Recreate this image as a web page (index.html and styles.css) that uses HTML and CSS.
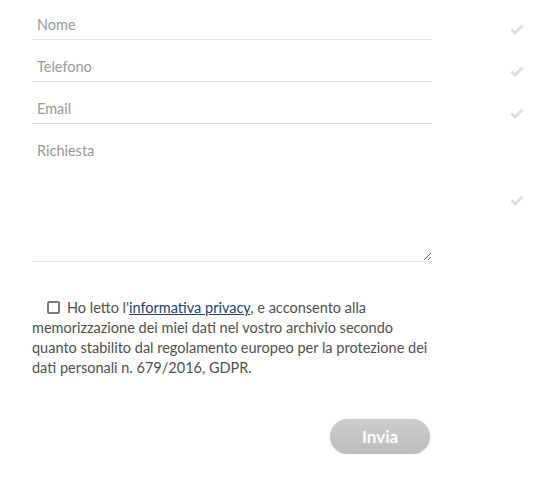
FILE: index.html
```html
<!DOCTYPE html>
<html lang="it">
<head>
<meta charset="utf-8">
<link rel="stylesheet" href="styles.css">
</head>
<body>
<form class="form">
  <div class="row">
    <input class="field" type="text" placeholder="Nome">
    <span class="check"><svg viewBox="0 0 14 11" width="14" height="11"><path d="M1.5 5.5 L5 9 L12.5 1.5" fill="none" stroke="#dcdcdc" stroke-width="3"/></svg></span>
  </div>
  <div class="row">
    <input class="field" type="text" placeholder="Telefono">
    <span class="check"><svg viewBox="0 0 14 11" width="14" height="11"><path d="M1.5 5.5 L5 9 L12.5 1.5" fill="none" stroke="#dcdcdc" stroke-width="3"/></svg></span>
  </div>
  <div class="row">
    <input class="field" type="text" placeholder="Email">
    <span class="check"><svg viewBox="0 0 14 11" width="14" height="11"><path d="M1.5 5.5 L5 9 L12.5 1.5" fill="none" stroke="#dcdcdc" stroke-width="3"/></svg></span>
  </div>
  <div class="row row-area">
    <textarea class="field area" placeholder="Richiesta"></textarea>
    <span class="check check-area"><svg viewBox="0 0 14 11" width="14" height="11"><path d="M1.5 5.5 L5 9 L12.5 1.5" fill="none" stroke="#dcdcdc" stroke-width="3"/></svg></span>
  </div>
  <p class="consent"><span class="box"></span>Ho letto l'<a href="#" class="link">informativa privacy</a>, e acconsento alla memorizzazione dei miei dati nel vostro archivio secondo quanto stabilito dal regolamento europeo per la protezione dei dati personali n. 679/2016, GDPR.</p>
  <div class="actions">
    <button type="button" class="send">Invia</button>
  </div>
</form>
</body>
</html>
```
FILE: styles.css
```css
html, body {
  margin: 0;
  padding: 0;
  background: #fff;
}
body {
  font-family: "Lato", "Open Sans", sans-serif;
}
.form {
  padding-left: 32px;
  width: 400px;
}
.row {
  display: flex;
  align-items: flex-start;
  margin-bottom: 2px;
  width: 500px;
}
.field {
  box-sizing: border-box;
  width: 400px;
  height: 40px;
  margin: 0;
  padding: 16px 5px 6px;
  border: 0;
  border-bottom: 1px solid #e0e0e0;
  font-family: inherit;
  font-size: 14.5px;
  line-height: 17px;
  color: #555;
  background: #fff;
  outline: none;
}
.field::placeholder {
  color: #999;
}
.area {
  height: 136px;
  resize: vertical;
  display: block;
}
.check {
  display: block;
  margin-left: 78px;
  margin-top: 24px;
  line-height: 0;
}
.check-area {
  margin-top: 69px;
}
.consent {
  margin: 36px 0 0;
  font-size: 14.5px;
  line-height: 20px;
  color: #505050;
}
.box {
  display: inline-block;
  box-sizing: border-box;
  width: 13px;
  height: 13px;
  border: 2px solid #7a7a7a;
  border-radius: 2px;
  margin-left: 15px;
  margin-right: 7px;
  vertical-align: -1px;
}
.link {
  color: #24406e;
  text-decoration: underline;
}
.actions {
  display: flex;
  justify-content: flex-end;
  margin-top: 41px;
  padding-right: 2px;
}
.send {
  width: 100px;
  height: 35px;
  border: 0;
  border-radius: 18px;
  background: linear-gradient(#cccccc, #bdbdbd);
  box-shadow: 0 1px 2px rgba(0,0,0,0.15);
  color: #fff;
  font-family: inherit;
  font-weight: bold;
  font-size: 17px;
}
```
